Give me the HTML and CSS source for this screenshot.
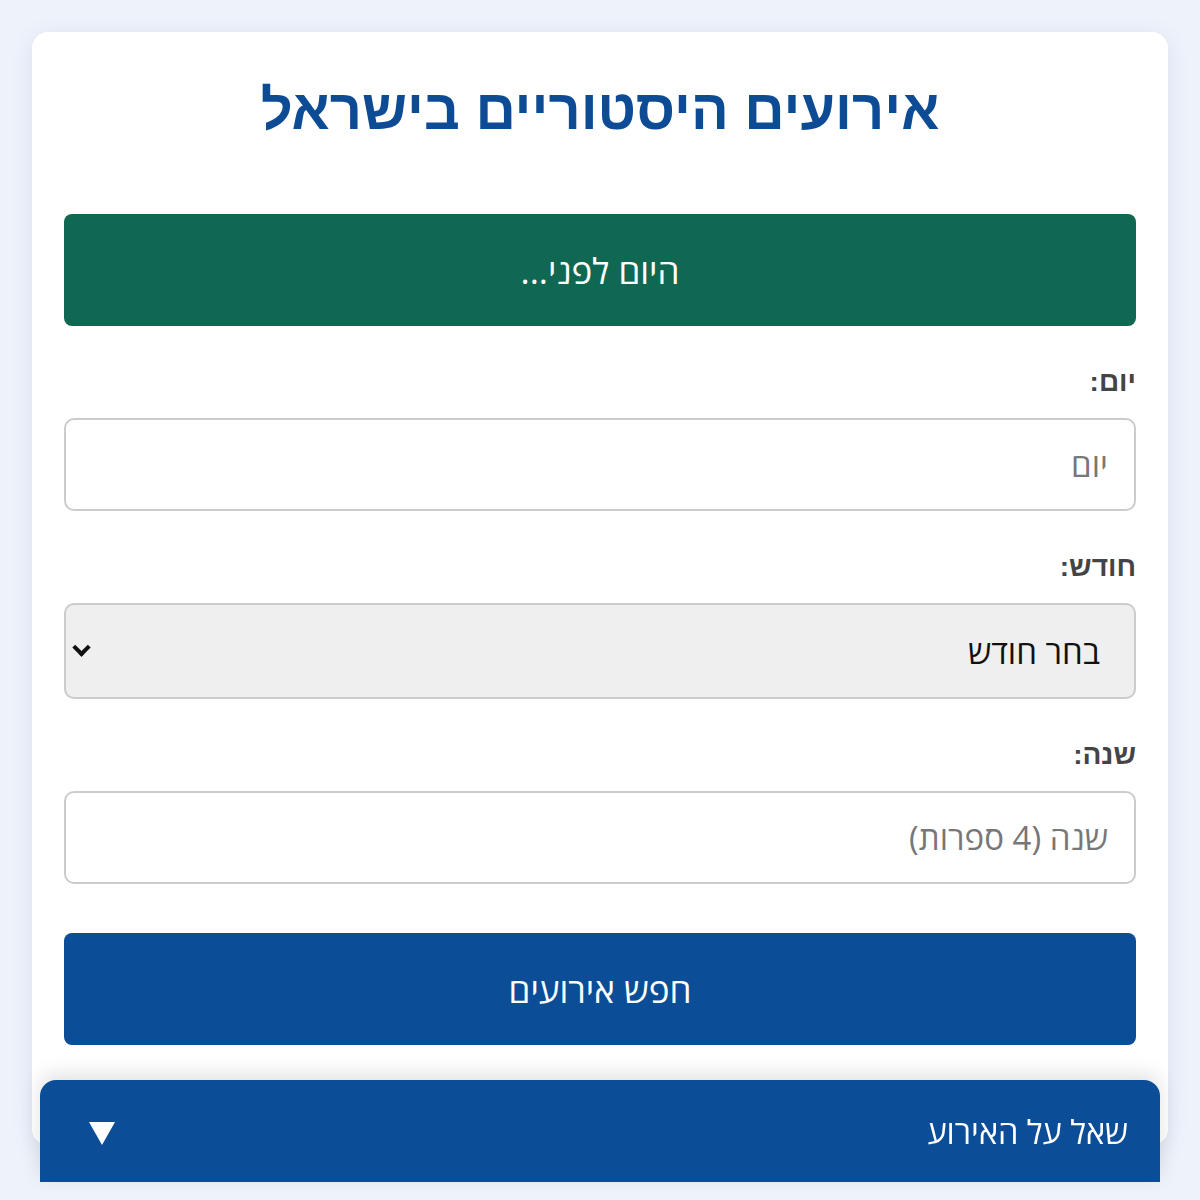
FILE: index.html
```html
<!DOCTYPE html>
<html lang="he" dir="rtl">
  <head>
    <meta charset="UTF-8" />
    <meta name="viewport" content="width=device-width, initial-scale=1.0" />
    <title>אירועים היסטוריים בישראל</title>
    <link rel="stylesheet" href="styles.css">
  </head>
  <body>
    <main class="card">
      <h1>אירועים היסטוריים בישראל</h1>

      <button type="button" class="btn btn-today">היום לפני...</button>

      <form class="search-form">
        <label for="day">יום:</label>
        <input type="number" id="day" name="day" placeholder="יום" />

        <label for="month">חודש:</label>
        <div class="select-wrap">
          <select id="month" name="month">
            <option value="">בחר חודש</option>
            <option value="1">ינואר</option>
            <option value="2">פברואר</option>
            <option value="3">מרץ</option>
          </select>
        </div>

        <label for="year">שנה:</label>
        <input type="number" id="year" name="year" placeholder="שנה (4 ספרות)" />

        <button type="submit" class="btn btn-search">חפש אירועים</button>
      </form>
    </main>

    <details class="ask">
      <summary>שאל על האירוע</summary>
      <p>שאלה</p>
    </details>
  </body>
</html>
```

FILE: styles.css
```css
body {
  margin: 0;
  padding: 32px;
  background: #edf2fb;
  font-family: "Liberation Sans", Arial, sans-serif;
  color: #333;
}
.card {
  background: #fff;
  border-radius: 16px;
  padding: 32px 32px 100px;
  box-shadow: 0 4px 24px rgba(20, 40, 90, 0.08);
}
h1 {
  margin: 13px 0 72px;
  text-align: center;
  font-size: 56px;
  color: #0d4c94;
}
.btn {
  display: block;
  width: 100%;
  height: 112px;
  border: none;
  border-radius: 8px;
  color: #fff;
  font-family: "Open Sans", sans-serif;
  font-size: 35px;
  cursor: pointer;
}
.btn-today {
  background: #106853;
}
.btn-search {
  background: #0b4d96;
  margin-top: 49px;
}
.search-form {
  display: flex;
  flex-direction: column;
}
label {
  font-size: 28px;
  font-weight: bold;
  color: #444;
  margin: 40px 0 20px;
}
input,
select {
  box-sizing: border-box;
  width: 100%;
  height: 93px;
  border: 2px solid #ccc;
  border-radius: 10px;
  padding: 0 26px;
  font-family: "Open Sans", sans-serif;
  font-size: 33px;
  color: #222;
  background: #fff;
}
input::placeholder {
  color: #777;
}
.select-wrap {
  position: relative;
}
.select-wrap::after {
  content: "";
  position: absolute;
  left: 11px;
  top: 38px;
  width: 9px;
  height: 9px;
  border-right: 4px solid #111;
  border-bottom: 4px solid #111;
  transform: rotate(45deg);
  pointer-events: none;
}
select {
  appearance: none;
  height: 96px;
  padding-right: 34px;
  background: #efefef;
  color: #111;
}
.ask {
  position: fixed;
  left: 40px;
  right: 40px;
  bottom: 18px;
  background: #0b4d96;
  color: #fff;
  border-radius: 16px 16px 0 0;
  box-shadow: 0 -6px 20px rgba(0, 0, 0, 0.12);
}
.ask summary {
  height: 102px;
  display: flex;
  align-items: center;
  justify-content: space-between;
  padding: 0 32px 0 49px;
  font-family: "Open Sans", sans-serif;
  font-size: 32.5px;
  list-style: none;
  cursor: pointer;
}
.ask summary::after {
  content: "";
  margin-top: 4px;
  border-left: 13px solid transparent;
  border-right: 13px solid transparent;
  border-top: 23px solid #fff;
}
.ask p {
  margin: 0;
  padding: 0 32px 24px;
}
```
